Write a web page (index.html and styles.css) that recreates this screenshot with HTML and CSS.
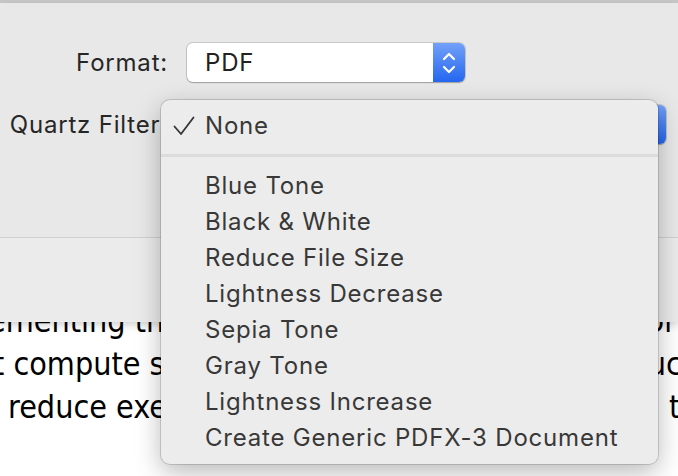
FILE: index.html
```html
<!DOCTYPE html>
<html lang="en">
<head>
<meta charset="utf-8">
<title>Print dialog – Quartz Filter</title>
<link rel="stylesheet" href="styles.css">
</head>
<body>
<div class="titlebar"></div>
<div class="sheet">
  <div class="form">
    <div class="label">Format:</div>
    <div class="popup popup-format">
      <span class="popup-value">PDF</span>
      <span class="stepper">
        <svg width="14" height="26" viewBox="0 0 14 26"><polyline points="2,9 7,4 12,9" fill="none" stroke="#fff" stroke-width="2.2" stroke-linecap="round" stroke-linejoin="round"/><polyline points="2,17 7,22 12,17" fill="none" stroke="#fff" stroke-width="2.2" stroke-linecap="round" stroke-linejoin="round"/></svg>
      </span>
    </div>
    <div class="label">Quartz Filter:</div>
    <div class="popup popup-filter">
      <span class="popup-value">None</span>
      <span class="stepper">
        <svg width="14" height="26" viewBox="0 0 14 26"><polyline points="2,9 7,4 12,9" fill="none" stroke="#fff" stroke-width="2.2" stroke-linecap="round" stroke-linejoin="round"/><polyline points="2,17 7,22 12,17" fill="none" stroke="#fff" stroke-width="2.2" stroke-linecap="round" stroke-linejoin="round"/></svg>
      </span>
    </div>
  </div>
  <div class="footer"></div>
</div>
<div class="doc">
  <div class="doc-line"><span class="frag-l1">ementing the proposed</span><span class="frag-r1">or</span></div>
  <div class="doc-line"><span class="frag-l2">t compute steps</span><span class="frag-r2">such</span></div>
  <div class="doc-line"><span class="frag-l3">reduce execution</span><span class="frag-r3">to</span></div>
</div>
<div class="menu">
  <div class="menu-item checked">
    <svg class="check" width="22" height="20" viewBox="0 0 22 20"><polyline points="1.5,10.5 8,18 20.5,1.5" fill="none" stroke="#333" stroke-width="1.8" stroke-linecap="round" stroke-linejoin="round"/></svg>
    None
  </div>
  <div class="menu-sep"></div>
  <div class="menu-item">Blue Tone</div>
  <div class="menu-item">Black &amp; White</div>
  <div class="menu-item">Reduce File Size</div>
  <div class="menu-item">Lightness Decrease</div>
  <div class="menu-item">Sepia Tone</div>
  <div class="menu-item">Gray Tone</div>
  <div class="menu-item">Lightness Increase</div>
  <div class="menu-item">Create Generic PDFX-3 Document</div>
</div>
</body>
</html>
```

FILE: styles.css
```css
html, body {
  margin: 0;
  padding: 0;
}

body {
  width: 678px;
  height: 476px;
  overflow: hidden;
  position: relative;
  background: #ffffff;
  font-family: Inter, "Noto Sans", "Liberation Sans", sans-serif;
}

.titlebar {
  height: 3px;
  background: #c9c9c9;
}

.sheet {
  position: relative;
  z-index: 1;
  background: #e8e8e8;
  box-shadow: 0 3px 8px rgba(0, 0, 0, 0.18);
}

.form {
  display: grid;
  grid-template-columns: 168px 479px;
  column-gap: 19px;
  row-gap: 23px;
  align-items: center;
  padding: 40px 0 93px;
}

.label {
  text-align: right;
  font-size: 24px;
  letter-spacing: 0.8px;
  color: #262626;
  white-space: nowrap;
}

.popup {
  height: 39px;
  box-sizing: border-box;
  display: flex;
  align-items: center;
  justify-content: space-between;
  background: #ffffff;
  border-radius: 6px;
  box-shadow: 0 0 0 1px rgba(0, 0, 0, 0.13), 0 1px 1.5px rgba(0, 0, 0, 0.22);
  font-size: 24px;
  letter-spacing: 0.8px;
  color: #222;
  padding-left: 18px;
}

.popup-format {
  width: 278px;
}

.popup-filter {
  width: 479px;
}

.stepper {
  width: 32px;
  height: 100%;
  background: linear-gradient(#72a1f8, #2566ef);
  border-radius: 0 6px 6px 0;
  display: flex;
  align-items: center;
  justify-content: center;
}

.footer {
  height: 84px;
  border-top: 1px solid #cfcfcf;
  background: #ebebeb;
}

.doc {
  margin-top: -22px;
  font-family: "DejaVu Sans Condensed", "DejaVu Sans", sans-serif;
  font-stretch: condensed;
  font-size: 32px;
  line-height: 43px;
  color: #000;
}

.doc-line {
  display: flex;
  justify-content: space-between;
  white-space: nowrap;
}

.frag-l1 { margin-left: -12px; }
.frag-l2 { margin-left: -7px; }
.frag-l3 { margin-left: 8px; }
.frag-r1 { margin-right: 2px; }
.frag-r2 { margin-right: -22px; }
.frag-r3 { margin-right: -20px; }

.menu {
  position: absolute;
  z-index: 2;
  left: 161px;
  top: 100px;
  width: 497px;
  height: 364px;
  box-sizing: border-box;
  padding: 7px 0 9px;
  background: #ececec;
  border-radius: 9px;
  box-shadow: 0 0 0 1px rgba(0, 0, 0, 0.14), 0 8px 26px rgba(0, 0, 0, 0.28);
}

.menu-item {
  position: relative;
  height: 36px;
  display: flex;
  align-items: center;
  padding-left: 44px;
  font-size: 24px;
  letter-spacing: 0.8px;
  color: #383838;
  white-space: nowrap;
}

.check {
  position: absolute;
  left: 12px;
  top: 9px;
}

.menu-sep {
  height: 24px;
  display: flex;
  align-items: center;
}

.menu-sep::after {
  content: "";
  display: block;
  width: 100%;
  height: 3px;
  background: #dcdcdc;
}
```
